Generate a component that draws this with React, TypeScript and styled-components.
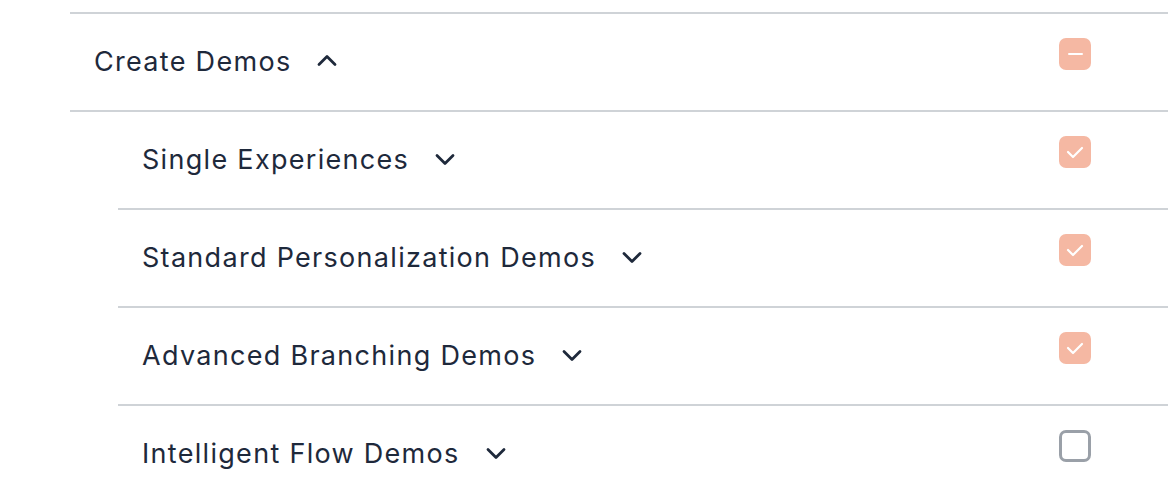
import React from "react";
import styled, { createGlobalStyle } from "styled-components";

const Global = createGlobalStyle`
  html, body { margin: 0; padding: 0; background: #ffffff; }
  body { font-family: "Inter", "Noto Sans", sans-serif; }
`;

const Page = styled.div`
  width: 1168px;
  height: 490px;
  overflow: hidden;
  padding-top: 12px;
  box-sizing: border-box;
`;

const Tree = styled.div`
  margin-left: 70px;
  width: 1098px;
  border-top: 2px solid #cfd3d7;
`;

const Children = styled.div`
  margin-left: 48px;
`;

const Row = styled.div`
  display: flex;
  align-items: flex-start;
  padding: 24px 77px 24px 24px;
  border-bottom: 2px solid #cfd3d7;
`;

const Label = styled.div`
  display: flex;
  align-items: center;
  gap: 24px;
  box-sizing: border-box;
  height: 48px;
  padding-bottom: 2px;
  font-size: 27px;
  color: #1e293b;
  letter-spacing: 1.3px;
  flex: 1;
`;

const Chevron = styled.svg`
  width: 24px;
  height: 24px;
  flex: none;
`;

const Box = styled.div<{ $state: "checked" | "mixed" | "empty" }>`
  width: 32px;
  height: 32px;
  box-sizing: border-box;
  border-radius: 7px;
  display: flex;
  align-items: center;
  justify-content: center;
  flex: none;
  background: ${(p) => (p.$state === "empty" ? "#ffffff" : "#f5b8a3")};
  border: ${(p) => (p.$state === "empty" ? "3px solid #9aa0a8" : "none")};
`;

const Dash = styled.div`
  width: 15px;
  height: 2px;
  border-radius: 1px;
  background: #ffffff;
`;

const Up = () => (
  <Chevron viewBox="0 0 24 24" fill="none" stroke="#1e293b" strokeWidth={2.8} strokeLinecap="round" strokeLinejoin="round">
    <path d="M4 15.5l8-8 8 8" />
  </Chevron>
);

const Down = () => (
  <Chevron viewBox="0 0 24 24" fill="none" stroke="#1e293b" strokeWidth={2.8} strokeLinecap="round" strokeLinejoin="round">
    <path d="M4 8.5l8 8 8-8" />
  </Chevron>
);

const Check = () => (
  <svg width="20" height="20" viewBox="0 0 20 20" fill="none" stroke="#ffffff" strokeWidth={2.2} strokeLinecap="round" strokeLinejoin="round">
    <path d="M3 10l5 5 9-9" />
  </svg>
);

type Item = { label: string; state: "checked" | "mixed" | "empty" };

const items: Item[] = [
  { label: "Single Experiences", state: "checked" },
  { label: "Standard Personalization Demos", state: "checked" },
  { label: "Advanced Branching Demos", state: "checked" },
  { label: "Intelligent Flow Demos", state: "empty" },
];

const CheckBox = ({ state }: { state: Item["state"] }) => (
  <Box $state={state}>
    {state === "checked" && <Check />}
    {state === "mixed" && <Dash />}
  </Box>
);

export default function App() {
  return (
    <Page>
      <Global />
      <Tree>
        <Row>
          <Label>
            Create Demos
            <Up />
          </Label>
          <CheckBox state="mixed" />
        </Row>
        <Children>
          {items.map((it) => (
            <Row key={it.label}>
              <Label>
                {it.label}
                <Down />
              </Label>
              <CheckBox state={it.state} />
            </Row>
          ))}
        </Children>
      </Tree>
    </Page>
  );
}
